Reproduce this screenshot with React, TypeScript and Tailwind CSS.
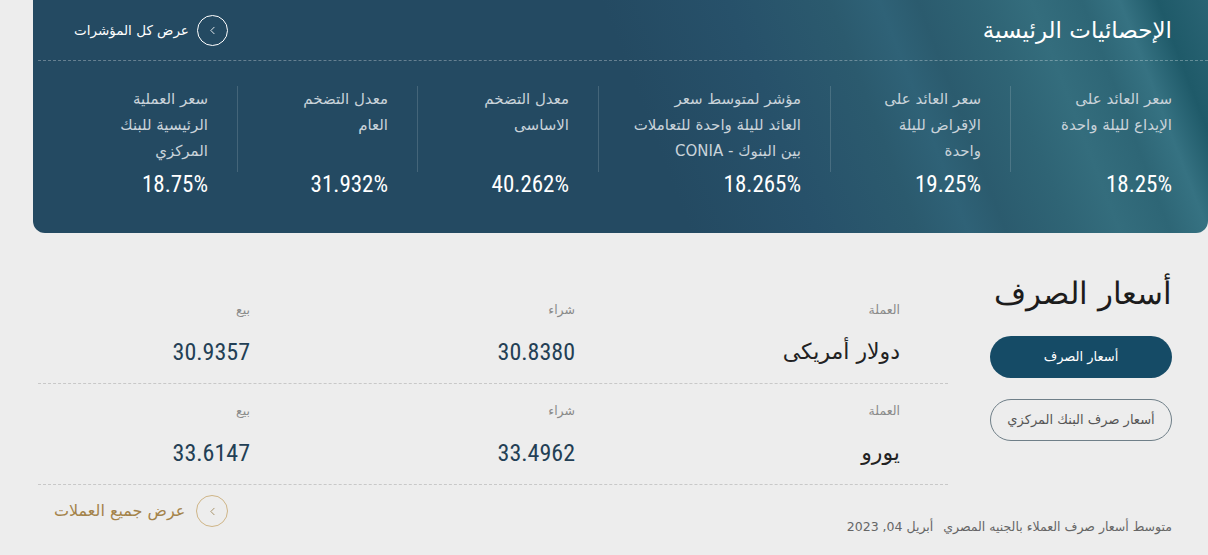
import React from "react";
import { ChevronLeft } from "lucide-react";

const stats = [
  { label: ["سعر العائد على", "الإيداع لليلة واحدة"], value: "18.25%", w: "w-[162px]", pr: "pr-0" },
  { label: ["سعر العائد على", "الإقراض لليلة", "واحدة"], value: "19.25%", w: "w-[180px]", pr: "pr-[29px]" },
  { label: ["مؤشر لمتوسط سعر", "العائد لليلة واحدة للتعاملات", "بين البنوك - CONIA"], value: "18.265%", w: "w-[232px]", pr: "pr-[29px]" },
  { label: ["معدل التضخم", "الاساسى"], value: "40.262%", w: "w-[181px]", pr: "pr-[29px]" },
  { label: ["معدل التضخم", "العام"], value: "31.932%", w: "w-[180px]", pr: "pr-[29px]" },
  { label: ["سعر العملية", "الرئيسية للبنك", "المركزي"], value: "18.75%", w: "w-[204px]", pr: "pr-[29px]", last: true },
];

const rates = [
  { name: "دولار أمريكى", buy: "30.8380", sell: "30.9357" },
  { name: "يورو", buy: "33.4962", sell: "33.6147" },
];

function StatColumn({ s }: { s: (typeof stats)[number] }) {
  return (
    <div className={`${s.w} ${s.pr} flex flex-col`}>
      <div className={`h-[86px] text-[15px] leading-[26px] text-[#c9d3da] ${s.last ? "" : "border-l border-white/15"}`}>
        {s.label.map((l) => (
          <div key={l} className="whitespace-nowrap">{l}</div>
        ))}
      </div>
      <div className="font-['Roboto_Condensed',Roboto,sans-serif] text-[23px] leading-[26px] text-white" dir="ltr" style={{ textAlign: "right" }}>
        {s.value}
      </div>
    </div>
  );
}

export default function App() {
  return (
    <div dir="rtl" className="w-[1208px] h-[555px] overflow-hidden bg-[#ededed] font-['DejaVu_Sans',sans-serif]">
      {/* main stats card */}
      <section className="ml-[33px] h-[233px] rounded-b-[12px] text-white bg-[linear-gradient(69deg,#244a62_0%,#244a62_52%,#27516a_62%,#2b5a6e_70%,#2f6277_74%,#2b5b6e_77%,#2f6475_82%,#346d7d_86%,#2e6676_90%,#367282_93%,#1f5a69_96%,#2a6474_100%)]">
        <div className="flex h-[60px] items-center justify-between pr-[36px] pl-[41px]">
          <h2 className="text-[23px] font-normal">الإحصائيات الرئيسية</h2>
          <a className="flex items-center gap-[8px] text-[13.5px]">
            <span className="flex h-[31px] w-[31px] items-center justify-center rounded-full border border-white">
              <ChevronLeft className="h-[13px] w-[13px]" strokeWidth={1.6} />
            </span>
            <span>عرض كل المؤشرات</span>
          </a>
        </div>
        <div className="ml-[5px] border-t border-dashed border-white/30" />
        <div className="flex pr-[36px] pt-[25px]">
          {stats.map((s) => (
            <StatColumn key={s.value} s={s} />
          ))}
        </div>
      </section>

      {/* exchange rates */}
      <section className="flex gap-[42px] pr-[36px] pt-[40px]">
        <aside className="flex w-[182px] shrink-0 flex-col">
          <h2 className="text-[31px] leading-[40px] font-light text-[#1c1c1c]">أسعار الصرف</h2>
          <button className="mt-[23px] h-[42px] rounded-full bg-[#154b66] text-[13px] text-white">أسعار الصرف</button>
          <button className="mt-[21px] h-[42px] rounded-full border border-[#6f7f88] text-[13px] text-[#555]">
            أسعار صرف البنك المركزي
          </button>
          <p className="mt-[76px] flex gap-[10px] whitespace-nowrap text-[12.5px] leading-[20px] text-[#666]">
            <span>متوسط أسعار صرف العملاء بالجنيه المصري</span>
            <span>أبريل 04, 2023</span>
          </p>
        </aside>

        <div className="mt-[10px] w-[910px]">
          {rates.map((r) => (
            <div key={r.name} className="flex border-b border-dashed border-[#c8c8c8] pt-[17px] pb-[15px]">
              <div className="w-[325px] pr-[48px]">
                <div className="h-[20px] text-[12.5px] leading-[20px] text-[#8a8a8a]">العملة</div>
                <div className="mt-[16px] h-[32px] text-[22px] leading-[32px] text-[#222]">{r.name}</div>
              </div>
              <div className="w-[325px] pr-[48px]">
                <div className="h-[20px] text-[12.5px] leading-[20px] text-[#8a8a8a]">شراء</div>
                <div className="mt-[16px] h-[32px] font-['Roboto_Condensed',Roboto,sans-serif] text-[24px] leading-[32px] text-[#233f55]">{r.buy}</div>
              </div>
              <div className="w-[260px] pr-[48px]">
                <div className="h-[20px] text-[12.5px] leading-[20px] text-[#8a8a8a]">بيع</div>
                <div className="mt-[16px] h-[32px] font-['Roboto_Condensed',Roboto,sans-serif] text-[24px] leading-[32px] text-[#233f55]">{r.sell}</div>
              </div>
            </div>
          ))}
          <div className="mt-[10px] flex justify-end pl-[16px]">
            <a className="flex items-center gap-[11px] text-[16px] text-[#a4834a]">
              <span className="flex h-[32px] w-[32px] items-center justify-center rounded-full border border-[#cfb587]">
                <ChevronLeft className="h-[13px] w-[13px] text-[#9c8558]" strokeWidth={1.6} />
              </span>
              <span>عرض جميع العملات</span>
            </a>
          </div>
        </div>
      </section>
    </div>
  );
}
